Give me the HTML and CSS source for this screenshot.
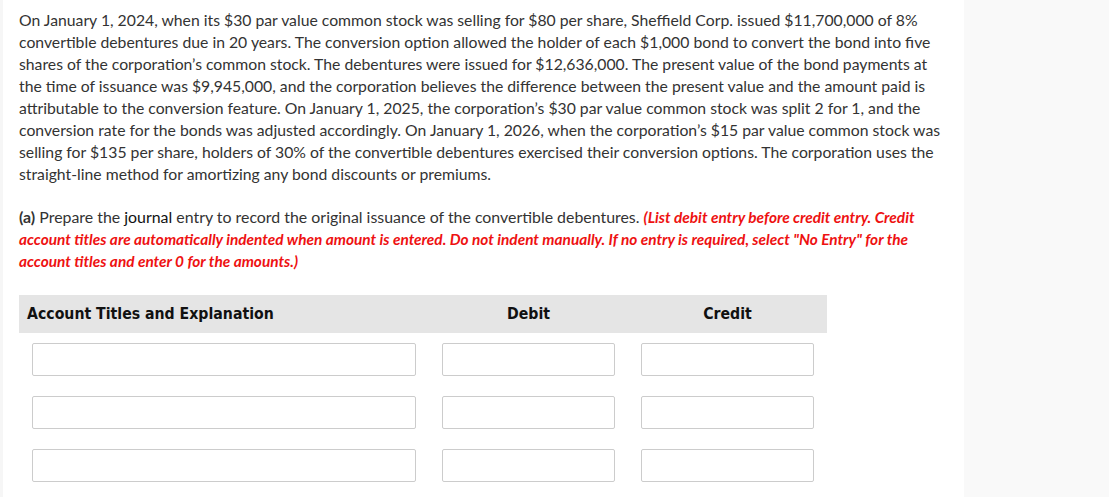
FILE: index.html
```html
<!DOCTYPE html>
<html>
<head>
<meta charset="utf-8">
<link rel="stylesheet" href="styles.css">
</head>
<body>
<div class="page">
  <main class="content">
    <p class="problem">On January 1, 2024, when its $30 par value common stock was selling for $80 per share, Sheffield Corp. issued $11,700,000 of 8%<br>convertible debentures due in 20 years. The conversion option allowed the holder of each $1,000 bond to convert the bond into five<br>shares of the corporation’s common stock. The debentures were issued for $12,636,000. The present value of the bond payments at<br>the time of issuance was $9,945,000, and the corporation believes the difference between the present value and the amount paid is<br>attributable to the conversion feature. On January 1, 2025, the corporation’s $30 par value common stock was split 2 for 1, and the<br>conversion rate for the bonds was adjusted accordingly. On January 1, 2026, when the corporation’s $15 par value common stock was<br>selling for $135 per share, holders of 30% of the convertible debentures exercised their conversion options. The corporation uses the<br>straight-line method for amortizing any bond discounts or premiums.</p>
    <p class="question"><span class="label">(a)</span> Prepare the <span class="term">journal</span> entry to record the original issuance of the convertible debentures. <em class="note">(List debit entry before credit entry. Credit<br>account titles are automatically indented when amount is entered. Do not indent manually. If no entry is required, select "No Entry" for the<br>account titles and enter 0 for the amounts.)</em></p>
    <div class="journal">
      <div class="head">Account Titles and Explanation</div>
      <div class="head center">Debit</div>
      <div class="head center">Credit</div>
      <div class="cell"><input class="field" type="text"></div>
      <div class="cell"><input class="field" type="text"></div>
      <div class="cell"><input class="field" type="text"></div>
      <div class="cell"><input class="field" type="text"></div>
      <div class="cell"><input class="field" type="text"></div>
      <div class="cell"><input class="field" type="text"></div>
      <div class="cell"><input class="field" type="text"></div>
      <div class="cell"><input class="field" type="text"></div>
      <div class="cell"><input class="field" type="text"></div>
    </div>
  </main>
  <aside class="side"></aside>
</div>
</body>
</html>
```
FILE: styles.css
```css
html, body {
  margin: 0;
  padding: 0;
  background: #ffffff;
}
.page {
  display: flex;
  min-height: 497px;
  border-left: 3px solid #f6f6f6;
}
.content {
  width: 945px;
  padding: 9px 0 0 16px;
  font-family: Lato, "Open Sans", sans-serif;
  font-size: 15.75px;
  line-height: 22px;
  color: #333333;
}
.side {
  flex: 1;
  background: #f9f9f9;
}
.problem {
  margin: 0;
  white-space: nowrap;
}
.question {
  margin: 21px 0 0 0;
  white-space: nowrap;
  font-size: 15.9px;
}
.label {
  font-weight: bold;
  color: #333333;
}
.term {
  color: #111111;
}
.note {
  color: #ee1111;
  font-weight: bold;
  font-size: 15.4px;
}
.journal {
  margin-top: 23px;
  width: 808px;
  display: grid;
  grid-template-columns: 410px 199px 199px;
  row-gap: 20px;
}
.head {
  background: #e5e5e5;
  height: 38px;
  line-height: 38px;
  padding-left: 8px;
  font-family: "DejaVu Sans Condensed", "DejaVu Sans", sans-serif;
  font-weight: bold;
  font-size: 15.7px;
  color: #111111;
  margin-bottom: -10px;
}
.head.center {
  padding-left: 0;
  text-align: center;
}
.cell {
  padding: 0 13px;
}
.field {
  box-sizing: border-box;
  display: block;
  width: 100%;
  height: 33px;
  margin: 0;
  border: 1px solid #cccccc;
  border-radius: 2px;
  background: #ffffff;
}
```
